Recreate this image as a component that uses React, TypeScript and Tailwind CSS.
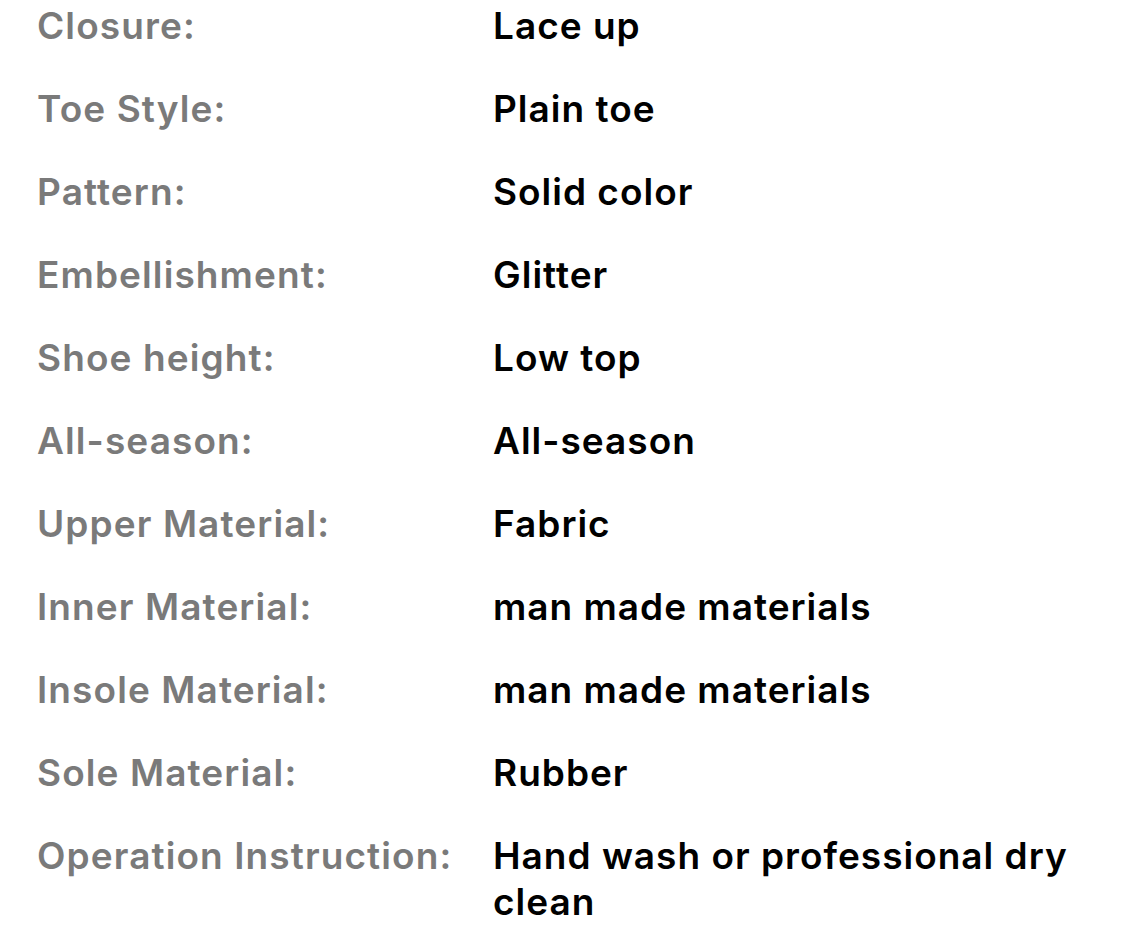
import React from 'react';

const specs: { label: string; value: string }[] = [
  { label: 'Closure:', value: 'Lace up' },
  { label: 'Toe Style:', value: 'Plain toe' },
  { label: 'Pattern:', value: 'Solid color' },
  { label: 'Embellishment:', value: 'Glitter' },
  { label: 'Shoe height:', value: 'Low top' },
  { label: 'All-season:', value: 'All-season' },
  { label: 'Upper Material:', value: 'Fabric' },
  { label: 'Inner Material:', value: 'man made materials' },
  { label: 'Insole Material:', value: 'man made materials' },
  { label: 'Sole Material:', value: 'Rubber' },
  { label: 'Operation Instruction:', value: 'Hand wash or professional dry clean' },
];

export default function App() {
  return (
    <div
      className="min-h-screen bg-white pl-[37px] pr-[36px] pt-[3px]"
      style={{ fontFamily: 'Inter, "Noto Sans", sans-serif' }}
    >
      {/* Spec rows */}
      <div className="flex flex-col gap-[37px]">
        {specs.map((spec) => (
          <div key={spec.label} className="flex text-[37px] leading-[46px]">
            <div className="w-[456px] shrink-0 font-semibold tracking-[1.1px] text-[#7a7a7a]">{spec.label}</div>
            <div className="flex-1 font-semibold tracking-[1px] text-black">{spec.value}</div>
          </div>
        ))}
      </div>
    </div>
  );
}
